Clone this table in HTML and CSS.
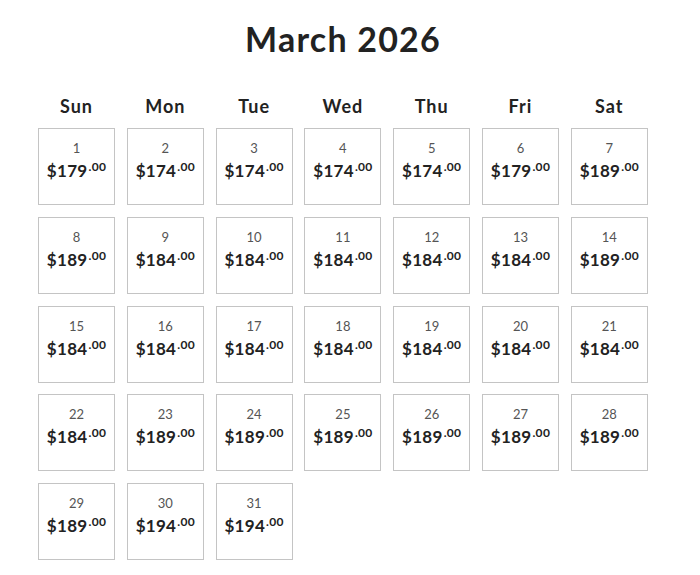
FILE: index.html
```html
<!DOCTYPE html>
<html lang="en">
<head>
<meta charset="utf-8">
<title>March 2026</title>
<link rel="stylesheet" href="styles.css">
</head>
<body>
<div class="calendar">
  <h1 class="title">March 2026</h1>
  <div class="weekdays">
    <div>Sun</div><div>Mon</div><div>Tue</div><div>Wed</div><div>Thu</div><div>Fri</div><div>Sat</div>
  </div>
  <div class="days">
    <div class="day"><span class="num">1</span><span class="price">$179<sup>.00</sup></span></div>
    <div class="day"><span class="num">2</span><span class="price">$174<sup>.00</sup></span></div>
    <div class="day"><span class="num">3</span><span class="price">$174<sup>.00</sup></span></div>
    <div class="day"><span class="num">4</span><span class="price">$174<sup>.00</sup></span></div>
    <div class="day"><span class="num">5</span><span class="price">$174<sup>.00</sup></span></div>
    <div class="day"><span class="num">6</span><span class="price">$179<sup>.00</sup></span></div>
    <div class="day"><span class="num">7</span><span class="price">$189<sup>.00</sup></span></div>
    <div class="day"><span class="num">8</span><span class="price">$189<sup>.00</sup></span></div>
    <div class="day"><span class="num">9</span><span class="price">$184<sup>.00</sup></span></div>
    <div class="day"><span class="num">10</span><span class="price">$184<sup>.00</sup></span></div>
    <div class="day"><span class="num">11</span><span class="price">$184<sup>.00</sup></span></div>
    <div class="day"><span class="num">12</span><span class="price">$184<sup>.00</sup></span></div>
    <div class="day"><span class="num">13</span><span class="price">$184<sup>.00</sup></span></div>
    <div class="day"><span class="num">14</span><span class="price">$189<sup>.00</sup></span></div>
    <div class="day"><span class="num">15</span><span class="price">$184<sup>.00</sup></span></div>
    <div class="day"><span class="num">16</span><span class="price">$184<sup>.00</sup></span></div>
    <div class="day"><span class="num">17</span><span class="price">$184<sup>.00</sup></span></div>
    <div class="day"><span class="num">18</span><span class="price">$184<sup>.00</sup></span></div>
    <div class="day"><span class="num">19</span><span class="price">$184<sup>.00</sup></span></div>
    <div class="day"><span class="num">20</span><span class="price">$184<sup>.00</sup></span></div>
    <div class="day"><span class="num">21</span><span class="price">$184<sup>.00</sup></span></div>
    <div class="day"><span class="num">22</span><span class="price">$184<sup>.00</sup></span></div>
    <div class="day"><span class="num">23</span><span class="price">$189<sup>.00</sup></span></div>
    <div class="day"><span class="num">24</span><span class="price">$189<sup>.00</sup></span></div>
    <div class="day"><span class="num">25</span><span class="price">$189<sup>.00</sup></span></div>
    <div class="day"><span class="num">26</span><span class="price">$189<sup>.00</sup></span></div>
    <div class="day"><span class="num">27</span><span class="price">$189<sup>.00</sup></span></div>
    <div class="day"><span class="num">28</span><span class="price">$189<sup>.00</sup></span></div>
    <div class="day"><span class="num">29</span><span class="price">$189<sup>.00</sup></span></div>
    <div class="day"><span class="num">30</span><span class="price">$194<sup>.00</sup></span></div>
    <div class="day"><span class="num">31</span><span class="price">$194<sup>.00</sup></span></div>
  </div>
</div>
</body>
</html>
```
FILE: styles.css
```css
html, body {
  margin: 0;
  padding: 0;
  background: #ffffff;
}
body {
  font-family: Lato, "Noto Sans", "Liberation Sans", sans-serif;
  color: #222222;
}
.calendar {
  width: 610px;
  margin-left: 38px;
  padding-top: 18px;
}
.title {
  margin: 0;
  text-align: center;
  font-size: 34px;
  line-height: 42px;
  font-weight: 700;
  color: #222222;
  letter-spacing: 1.2px;
}
.weekdays {
  display: grid;
  grid-template-columns: repeat(7, 77px);
  column-gap: 11.8px;
  margin-top: 37px;
  height: 31px;
}
.weekdays div {
  text-align: center;
  font-size: 18px;
  line-height: 18px;
  font-weight: 700;
  color: #222222;
  letter-spacing: 1px;
}
.days {
  display: grid;
  grid-template-columns: repeat(7, 77px);
  grid-auto-rows: 77px;
  column-gap: 11.8px;
  row-gap: 11.8px;
}
.day {
  box-sizing: border-box;
  border: 1px solid #c4c4c4;
  display: flex;
  flex-direction: column;
  align-items: center;
  padding-top: 11px;
}
.num {
  font-size: 13px;
  line-height: 16px;
  color: #555555;
}
.price {
  margin-top: 5px;
  font-size: 17px;
  line-height: 20px;
  font-weight: 700;
  color: #222222;
  letter-spacing: 0.3px;
}
.price sup {
  font-size: 12px;
  font-weight: 700;
  vertical-align: 0;
  position: relative;
  top: -6px;
  margin-left: 1px;
}
```
